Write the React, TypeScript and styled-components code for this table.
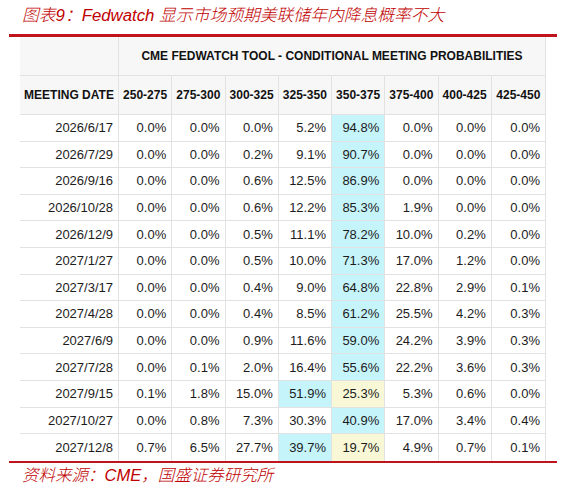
import { createGlobalStyle } from "styled-components";
import styled from "styled-components";

const GlobalStyle = createGlobalStyle`
    html, body {
        margin: 0;
        padding: 0;
        background: #ffffff;
    }
    body {
        width: 572px;
        height: 492px;
        overflow: hidden;
        font-family: "Liberation Sans", Arial, sans-serif;
    }
`;

const RED = "#c0141c";
const GRID = "#e2e2e2";

type Tone = "plain" | "cyan" | "yellow";

const toneColors: Record<Tone, string> = {
    plain: "#ffffff",
    cyan: "#c6f4fb",
    yellow: "#f8f8d6",
};

const Page = styled.main`
    display: flex;
    flex-direction: column;
    width: 572px;
`;

const Caption = styled.div`
    padding: 4px 0 6px 22px;
    height: 24px;
    line-height: 24px;
    font-family: "Liberation Sans", "Noto Sans CJK SC", sans-serif;
    font-style: italic;
    font-weight: 300;
    font-size: 16.8px;
    color: #c00000;
    white-space: nowrap;
`;

const Frame = styled.section`
    margin: 0 15px 0 9px;
    padding: 0 11px;
    border-top: 3px solid ${RED};
    border-bottom: 2px solid ${RED};
`;

const Table = styled.table`
    width: 526px;
    table-layout: fixed;
    border-collapse: separate;
    border-spacing: 0;
    border-right: 1px solid ${GRID};
    box-sizing: border-box;
`;

const HeadRow = styled.tr`
    background: #f7f7f7;
`;

const HeadCell = styled.th`
    box-sizing: border-box;
    height: 39px;
    padding: 0;
    border-right: 1px solid ${GRID};
    border-bottom: 1px solid ${GRID};
    font-size: 12px;
    font-weight: 700;
    color: #111111;
    text-align: center;
    white-space: nowrap;
    &:last-child {
        border-right: none;
    }
`;

const Row = styled.tr`
    &:last-child td {
        border-bottom: none;
    }
`;

const Cell = styled.td<{ $tone?: Tone }>`
    box-sizing: border-box;
    height: 26.6px;
    padding: 0 5px 0 0;
    border-right: 1px solid ${GRID};
    border-bottom: 1px solid ${GRID};
    background: ${p => toneColors[p.$tone || "plain"]};
    font-size: 13px;
    color: #1c1c1c;
    text-align: right;
    white-space: nowrap;
    &:last-child {
        border-right: none;
    }
`;

const Source = styled.div`
    padding-left: 22px;
    height: 24px;
    line-height: 24px;
    font-family: "Liberation Sans", "Noto Sans CJK SC", sans-serif;
    font-style: italic;
    font-weight: 300;
    font-size: 16.5px;
    color: #c00000;
    white-space: nowrap;
`;

const ranges = ["250-275", "275-300", "300-325", "325-350", "350-375", "375-400", "400-425", "425-450"];

const rows: [string, number[]][] = [
    ["2026/6/17", [0.0, 0.0, 0.0, 5.2, 94.8, 0.0, 0.0, 0.0]],
    ["2026/7/29", [0.0, 0.0, 0.2, 9.1, 90.7, 0.0, 0.0, 0.0]],
    ["2026/9/16", [0.0, 0.0, 0.6, 12.5, 86.9, 0.0, 0.0, 0.0]],
    ["2026/10/28", [0.0, 0.0, 0.6, 12.2, 85.3, 1.9, 0.0, 0.0]],
    ["2026/12/9", [0.0, 0.0, 0.5, 11.1, 78.2, 10.0, 0.2, 0.0]],
    ["2027/1/27", [0.0, 0.0, 0.5, 10.0, 71.3, 17.0, 1.2, 0.0]],
    ["2027/3/17", [0.0, 0.0, 0.4, 9.0, 64.8, 22.8, 2.9, 0.1]],
    ["2027/4/28", [0.0, 0.0, 0.4, 8.5, 61.2, 25.5, 4.2, 0.3]],
    ["2027/6/9", [0.0, 0.0, 0.9, 11.6, 59.0, 24.2, 3.9, 0.3]],
    ["2027/7/28", [0.0, 0.1, 2.0, 16.4, 55.6, 22.2, 3.6, 0.3]],
    ["2027/9/15", [0.1, 1.8, 15.0, 51.9, 25.3, 5.3, 0.6, 0.0]],
    ["2027/10/27", [0.0, 0.8, 7.3, 30.3, 40.9, 17.0, 3.4, 0.4]],
    ["2027/12/8", [0.7, 6.5, 27.7, 39.7, 19.7, 4.9, 0.7, 0.1]],
];

// highlighted cells: [row index, column index] -> tone
const highlight = (r: number, c: number): Tone => {
    if (r === 10 || r === 12) {
        if (c === 3) return "cyan";
        if (c === 4) return "yellow";
        return "plain";
    }
    return c === 4 ? "cyan" : "plain";
};

export default function App() {
    return <>
        <GlobalStyle />
        <Page>
            <Caption>图表9：Fedwatch 显示市场预期美联储年内降息概率不大</Caption>
            <Frame>
                <Table>
                    <colgroup>
                        <col style={{ width: 99 }} />
                        {ranges.map(r => <col key={r} />)}
                    </colgroup>
                    <thead>
                        <HeadRow>
                            <HeadCell />
                            <HeadCell colSpan={8}>CME FEDWATCH TOOL - CONDITIONAL MEETING PROBABILITIES</HeadCell>
                        </HeadRow>
                        <HeadRow>
                            <HeadCell>MEETING DATE</HeadCell>
                            {ranges.map(r => <HeadCell key={r}>{r}</HeadCell>)}
                        </HeadRow>
                    </thead>
                    <tbody>
                        {rows.map(([date, values], ri) => (
                            <Row key={date}>
                                <Cell>{date}</Cell>
                                {values.map((v, ci) => (
                                    <Cell key={ci} $tone={highlight(ri, ci)}>{v.toFixed(1)}%</Cell>
                                ))}
                            </Row>
                        ))}
                    </tbody>
                </Table>
            </Frame>
            <Source>资料来源：CME，国盛证券研究所</Source>
        </Page>
    </>;
}
